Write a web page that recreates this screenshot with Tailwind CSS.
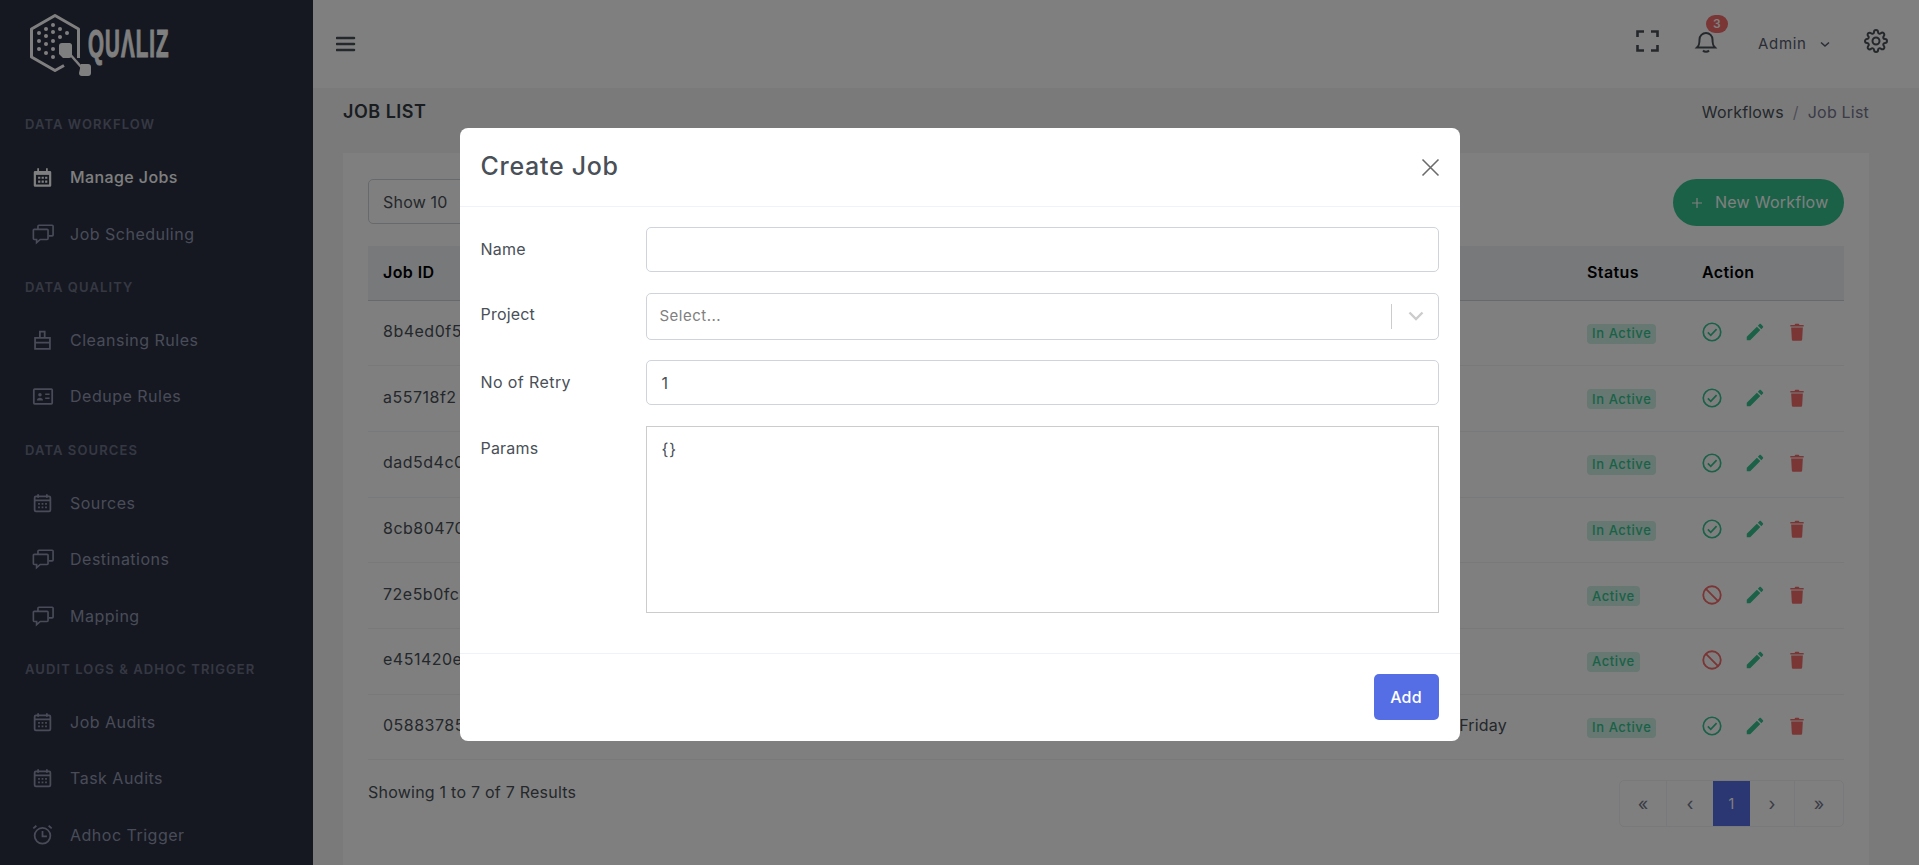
<!DOCTYPE html>
<html lang="en">
<head>
<meta charset="utf-8">
<title>Job List</title>
<script src="https://cdn.jsdelivr.net/npm/@tailwindcss/browser@4"></script>
</head>
<body class="h-screen overflow-hidden bg-[#f5f5f7] font-['Inter','Noto_Sans',sans-serif] text-[#495057] text-[16px] tracking-[0.2px]">
<svg class="hidden">
  <symbol id="cal" viewBox="0 0 24 24"><path d="M7 2v4M17 2v4" fill="none" stroke="currentColor" stroke-width="2"/><rect x="3" y="4.500" width="18" height="17" rx="1.500" fill="none" stroke="currentColor" stroke-width="2"/><path d="M3 9h18" stroke="currentColor" stroke-width="2"/><path d="M7 12h2v2H7zM11 12h2v2h-2zM15 12h2v2h-2zM7 16h2v2H7zM11 16h2v2h-2zM15 16h2v2h-2z" fill="currentColor"/></symbol>
  <symbol id="chat" viewBox="0 0 24 24"><path d="M2.500 7h14a1 1 0 0 1 1 1v9a1 1 0 0 1-1 1H9l-4 3.500V18H2.500a1 1 0 0 1-1-1V8a1 1 0 0 1 1-1z" fill="none" stroke="currentColor" stroke-width="1.800"/><path d="M6.500 6.500V3.500a1 1 0 0 1 1-1H22a1 1 0 0 1 1 1v9.500a1 1 0 0 1-1 1h-3.500" fill="none" stroke="currentColor" stroke-width="1.800"/></symbol>
  <symbol id="ok" viewBox="0 0 24 24"><circle cx="12" cy="12" r="10.500" fill="none" stroke="currentColor" stroke-width="2"/><path d="M7 12.500l3.500 3.500L17.500 8.500" fill="none" stroke="currentColor" stroke-width="2"/></symbol>
  <symbol id="ban" viewBox="0 0 24 24"><circle cx="12" cy="12" r="10.500" fill="none" stroke="currentColor" stroke-width="2.200"/><path d="M5 5l14 14" fill="none" stroke="currentColor" stroke-width="2.200"/></symbol>
  <symbol id="pen" viewBox="0 0 24 24"><path fill="currentColor" d="M20.710 7.040c.39-.39.39-1.040 0-1.410l-2.340-2.340c-.37-.39-1.020-.39-1.410 0l-1.840 1.830 3.750 3.750M3 17.250V21h3.750L17.810 9.930l-3.750-3.750L3 17.250z"/></symbol>
  <symbol id="bin" viewBox="0 0 24 24"><path fill="currentColor" d="M20 3.500H15l-1-1.500h-4L9 3.500H4v2h16zM5 6.500h14l-.8 14.500a1.500 1.500 0 0 1-1.500 1.500H7.300a1.500 1.500 0 0 1-1.500-1.500z"/></symbol>
</svg>

<div class="flex h-full">
  <!-- sidebar -->
  <aside class="w-[313px] shrink-0 bg-[#2a3042] text-[#9299b0] text-[16px] tracking-[0.5px]">
    <div class="relative h-[88px] mb-[11px]">
      <svg class="absolute left-0 top-0" width="100" height="88" viewBox="0 0 100 88">
        <path d="M78.500 58V29L55 15.500 31.500 29v28L55 70.500l9-5" fill="none" stroke="#fff" stroke-width="3" stroke-linejoin="round"/>
        <g fill="#fff"><circle cx="53" cy="25" r="2"/><circle cx="46" cy="29" r="2"/><circle cx="60" cy="29" r="2"/><circle cx="39" cy="33" r="2"/><circle cx="53" cy="32" r="2"/><circle cx="67" cy="33" r="2"/><circle cx="46" cy="36" r="2"/><circle cx="60" cy="37" r="2"/><circle cx="39" cy="41" r="2"/><circle cx="53" cy="41" r="2"/><circle cx="46" cy="44" r="2"/><circle cx="39" cy="49" r="2"/><circle cx="53" cy="49" r="2"/><circle cx="46" cy="53" r="2"/><circle cx="53" cy="57" r="2"/></g>
        <path d="M62 43h8a3 3 0 0 1 2 2v10a3 3 0 0 1-3 3h-6l-4-4v-8a3 3 0 0 1 3-3zM81 64h7a3 3 0 0 1 3 3v6a3 3 0 0 1-3 3h-6a3 3 0 0 1-3-3z" fill="#fff"/>
        <path d="M68 52l15 17" stroke="#fff" stroke-width="2.500"/>
      </svg>
      <span class="absolute left-[88px] top-[22px] origin-left scale-x-[0.54] text-[38px] leading-[44px] font-bold tracking-[2px] text-white [-webkit-text-stroke:1px_white] font-['Liberation_Sans',sans-serif]">QUΛLIZ</span>
    </div>

    <div class="h-[50px] pl-[25px] pt-[2px] flex items-center text-[13px] font-semibold tracking-[1.1px] text-[#6a7187]">DATA WORKFLOW</div>
    <a class="h-[56.4px] pl-[32px] flex items-center gap-[17px] font-medium tracking-[0.4px] text-white">
      <svg width="21" height="23" viewBox="0 0 24 24"><path fill="#fff" d="M6 1.500h2v3h8v-3h2v3h2.500A1.500 1.500 0 0 1 22 6v15a1.500 1.500 0 0 1-1.500 1.500h-17A1.500 1.500 0 0 1 2 21V6a1.500 1.500 0 0 1 1.500-1.500H6z"/><path fill="#2a3042" d="M4.500 9h15v11h-15z"/><path fill="#fff" d="M7 11h2.500v2.500H7zM11 11h2.500v2.500H11zM15 11h2.500v2.500H15zM7 15.500h2.500V18H7zM11 15.500h2.500V18H11zM15 15.500h2.500V18H15z"/></svg>
      <span>Manage Jobs</span>
    </a>
    <a class="h-[56.4px] pl-[32px] flex items-center gap-[16px]"><svg width="22" height="22"><use href="#chat"/></svg><span>Job Scheduling</span></a>

    <div class="h-[50px] pl-[25px] pt-[2px] flex items-center text-[13px] font-semibold tracking-[1.1px] text-[#6a7187]">DATA QUALITY</div>
    <a class="h-[56.4px] pl-[32px] flex items-center gap-[17px]">
      <svg width="21" height="22" viewBox="0 0 24 24" fill="none" stroke="currentColor" stroke-width="2"><path d="M3.500 9.500h17V22h-17zM3.500 15h17M9 9.500V2.500h5.500v7"/></svg>
      <span>Cleansing Rules</span></a>
    <a class="h-[56.4px] pl-[32px] flex items-center gap-[16px]">
      <svg width="22" height="21" viewBox="0 0 24 24" fill="none" stroke="currentColor" stroke-width="2"><rect x="1.500" y="3.500" width="21" height="17" rx="1"/><circle cx="8.500" cy="10" r="2" fill="currentColor" stroke="none"/><path d="M5 16.500c0-4 7-4 7 0z" fill="currentColor" stroke="none"/><path d="M14.500 9.500h5M14.500 14h5" stroke-width="1.600"/></svg>
      <span>Dedupe Rules</span></a>

    <div class="h-[50px] pl-[25px] pt-[2px] flex items-center text-[13px] font-semibold tracking-[1.1px] text-[#6a7187]">DATA SOURCES</div>
    <a class="h-[56.4px] pl-[32px] flex items-center gap-[17px]"><svg width="21" height="22"><use href="#cal"/></svg><span>Sources</span></a>
    <a class="h-[56.4px] pl-[32px] flex items-center gap-[16px]"><svg width="22" height="22"><use href="#chat"/></svg><span>Destinations</span></a>
    <a class="h-[56.4px] pl-[32px] flex items-center gap-[16px]"><svg width="22" height="22"><use href="#chat"/></svg><span>Mapping</span></a>

    <div class="h-[50px] pl-[25px] pt-[2px] flex items-center text-[13px] font-semibold tracking-[1.1px] text-[#6a7187]">AUDIT LOGS &amp; ADHOC TRIGGER</div>
    <a class="h-[56.4px] pl-[32px] flex items-center gap-[17px]"><svg width="21" height="22"><use href="#cal"/></svg><span>Job Audits</span></a>
    <a class="h-[56.4px] pl-[32px] flex items-center gap-[17px]"><svg width="21" height="22"><use href="#cal"/></svg><span>Task Audits</span></a>
    <a class="h-[56.4px] pl-[32px] flex items-center gap-[17px]">
      <svg width="21" height="21" viewBox="0 0 24 24" fill="none" stroke="currentColor" stroke-width="2"><circle cx="12" cy="13.500" r="9"/><path d="M12 8v6h5M1.500 5l3.500-3M22.500 5L19 2"/></svg>
      <span>Adhoc Trigger</span></a>
  </aside>

  <!-- main -->
  <main class="flex-1 min-w-0 flex flex-col">
    <header class="h-[88px] shrink-0 bg-white flex items-center pl-[23px] pr-[31px] text-[#555b6d]">
      <svg width="20" height="18" viewBox="0 0 20 18" class="mt-[-1px]"><path d="M1 3h17M1 9h17M1 15h17" stroke="#495057" stroke-width="2.600" stroke-linecap="round"/></svg>
      <div class="flex-1"></div>
      <svg width="23" height="22" viewBox="0 0 23 22" fill="none" stroke="#495057" stroke-width="2.600" class="mt-[-7px]"><path d="M1.500 7V1.500H8M15 1.500h6.500V7M21.500 15v5.500H15M8 20.500H1.500V15"/></svg>
      <div class="relative ml-[35px] mt-[-6px]">
        <svg width="24" height="25" viewBox="0 0 24 25" fill="none" stroke="#495057" stroke-width="2"><path d="M3 18.500c2-2 2.500-3 2.500-8a6.500 6.500 0 0 1 13 0c0 5 .5 6 2.500 8zM9 21.500c1.500 1.800 4.500 1.800 6 0"/></svg>
        <span class="absolute left-[12px] top-[-14px] w-[22px] h-[18px] rounded-full bg-[#f46a6a] text-white text-[12px] font-semibold flex items-center justify-center">3</span>
      </div>
      <span class="ml-[40px] w-[53px] text-[15px] tracking-[0.7px]">Admin</span>
      <svg width="10" height="7" viewBox="0 0 10 7" fill="none" stroke="#555b6d" stroke-width="1.600" class="ml-[9px]"><path d="M1 1.500l4 3.500 4-3.500"/></svg>
      <svg width="24" height="24" viewBox="0 0 24 24" fill="none" stroke="#495057" stroke-width="2" class="ml-[34px] mt-[-6px]"><circle cx="12" cy="12" r="3.500"/><path d="M19.400 15a1.650 1.650 0 0 0 .33 1.820l.06.06a2 2 0 0 1 0 2.830 2 2 0 0 1-2.830 0l-.06-.06a1.650 1.650 0 0 0-1.820-.33 1.650 1.650 0 0 0-1 1.510V21a2 2 0 0 1-2 2 2 2 0 0 1-2-2v-.09A1.650 1.650 0 0 0 9 19.400a1.650 1.650 0 0 0-1.820.33l-.06.06a2 2 0 0 1-2.830 0 2 2 0 0 1 0-2.830l.06-.06a1.650 1.650 0 0 0 .33-1.820 1.650 1.650 0 0 0-1.510-1H3a2 2 0 0 1-2-2 2 2 0 0 1 2-2h.09A1.650 1.650 0 0 0 4.600 9a1.650 1.650 0 0 0-.33-1.820l-.06-.06a2 2 0 0 1 0-2.830 2 2 0 0 1 2.830 0l.06.06a1.650 1.650 0 0 0 1.820.33H9a1.650 1.650 0 0 0 1-1.510V3a2 2 0 0 1 2-2 2 2 0 0 1 2 2v.09a1.650 1.650 0 0 0 1 1.510 1.650 1.650 0 0 0 1.820-.33l.06-.06a2 2 0 0 1 2.830 0 2 2 0 0 1 0 2.830l-.06.06a1.650 1.650 0 0 0-.33 1.820V9a1.650 1.650 0 0 0 1.510 1H21a2 2 0 0 1 2 2 2 2 0 0 1-2 2h-.09a1.650 1.650 0 0 0-1.510 1z"/></svg>
    </header>

    <div class="h-[65px] shrink-0 pl-[30px] pr-[50px] flex justify-between pt-[12px]">
      <h4 class="text-[18px] leading-[24px] font-semibold tracking-[0.5px] text-[#343a40]">JOB LIST</h4>
      <div class="text-[16px] leading-[24px] flex gap-[9px]"><span>Workflows</span><span class="text-[#74788d]/70">/</span><span class="text-[#74788d]">Job List</span></div>
    </div>

    <section class="ml-[30px] mr-[50px] flex-1 bg-white px-[25px] pt-[26px]">
      <div class="flex justify-between items-start h-[67px]">
        <div class="w-[200px] h-[45px] border border-[#ced4da] rounded-[5px] pl-[14px] flex items-center">Show 10</div>
        <div class="w-[171px] h-[47px] rounded-full bg-[#34c38f] text-white tracking-[0.25px] flex items-center pl-[18px] gap-[12px]">
          <svg width="12" height="12" viewBox="0 0 12 12"><path d="M6 1v10M1 6h10" stroke="#fff" stroke-width="1.200"/></svg>
          <span class="mt-[-2px]">New Workflow</span>
        </div>
      </div>
      <table class="w-full table-fixed border-collapse">
        <colgroup><col class="w-[300px]"><col><col class="w-[115px]"><col class="w-[157px]"></colgroup>
        <thead class="bg-[#eff2f7] text-black text-[16px] tracking-[0.4px]">
          <tr class="h-[54px] border-b border-[#ced4da]"><th class="text-left pl-[15px] pb-[2px] font-semibold">Job ID</th><th></th><th class="text-left pl-[15px] pb-[2px] font-semibold">Status</th><th class="text-left pl-[15px] pb-[2px] font-semibold">Action</th></tr>
        </thead>
        <tbody>
          <tr class="h-[65.7px] border-b border-[#eff2f7]"><td class="pl-[15px] pb-[4px] tracking-[0.5px]">8b4ed0f5</td><td></td><td class="pl-[15px] pb-[2px]"><span class="inline-flex items-center h-[20px] px-[5px] rounded-[4px] bg-[#34c38f]/25 text-[#34c38f] text-[13px] font-medium tracking-[0.6px]">In Active</span></td>
            <td class="pl-[15px] pb-[2px]"><div class="flex items-center text-[#34c38f]"><svg width="20" height="20"><use href="#ok"/></svg><svg width="22" height="22" class="ml-[22px]"><use href="#pen"/></svg><svg width="20" height="22" class="ml-[21px] text-[#f46a6a]"><use href="#bin"/></svg></div></td></tr>
          <tr class="h-[65.7px] border-b border-[#eff2f7]"><td class="pl-[15px] pb-[4px] tracking-[0.5px]">a55718f2</td><td></td><td class="pl-[15px] pb-[2px]"><span class="inline-flex items-center h-[20px] px-[5px] rounded-[4px] bg-[#34c38f]/25 text-[#34c38f] text-[13px] font-medium tracking-[0.6px]">In Active</span></td>
            <td class="pl-[15px] pb-[2px]"><div class="flex items-center text-[#34c38f]"><svg width="20" height="20"><use href="#ok"/></svg><svg width="22" height="22" class="ml-[22px]"><use href="#pen"/></svg><svg width="20" height="22" class="ml-[21px] text-[#f46a6a]"><use href="#bin"/></svg></div></td></tr>
          <tr class="h-[65.7px] border-b border-[#eff2f7]"><td class="pl-[15px] pb-[4px] tracking-[0.5px]">dad5d4c0</td><td></td><td class="pl-[15px] pb-[2px]"><span class="inline-flex items-center h-[20px] px-[5px] rounded-[4px] bg-[#34c38f]/25 text-[#34c38f] text-[13px] font-medium tracking-[0.6px]">In Active</span></td>
            <td class="pl-[15px] pb-[2px]"><div class="flex items-center text-[#34c38f]"><svg width="20" height="20"><use href="#ok"/></svg><svg width="22" height="22" class="ml-[22px]"><use href="#pen"/></svg><svg width="20" height="22" class="ml-[21px] text-[#f46a6a]"><use href="#bin"/></svg></div></td></tr>
          <tr class="h-[65.7px] border-b border-[#eff2f7]"><td class="pl-[15px] pb-[4px] tracking-[0.5px]">8cb80470</td><td></td><td class="pl-[15px] pb-[2px]"><span class="inline-flex items-center h-[20px] px-[5px] rounded-[4px] bg-[#34c38f]/25 text-[#34c38f] text-[13px] font-medium tracking-[0.6px]">In Active</span></td>
            <td class="pl-[15px] pb-[2px]"><div class="flex items-center text-[#34c38f]"><svg width="20" height="20"><use href="#ok"/></svg><svg width="22" height="22" class="ml-[22px]"><use href="#pen"/></svg><svg width="20" height="22" class="ml-[21px] text-[#f46a6a]"><use href="#bin"/></svg></div></td></tr>
          <tr class="h-[65.7px] border-b border-[#eff2f7]"><td class="pl-[15px] pb-[4px] tracking-[0.5px]">72e5b0fc</td><td></td><td class="pl-[15px] pb-[2px]"><span class="inline-flex items-center h-[20px] px-[5px] rounded-[4px] bg-[#34c38f]/25 text-[#34c38f] text-[13px] font-medium tracking-[0.6px]">Active</span></td>
            <td class="pl-[15px] pb-[2px]"><div class="flex items-center text-[#34c38f]"><svg width="20" height="20" class="text-[#f46a6a]"><use href="#ban"/></svg><svg width="22" height="22" class="ml-[22px]"><use href="#pen"/></svg><svg width="20" height="22" class="ml-[21px] text-[#f46a6a]"><use href="#bin"/></svg></div></td></tr>
          <tr class="h-[65.7px] border-b border-[#eff2f7]"><td class="pl-[15px] pb-[4px] tracking-[0.5px]">e451420e</td><td></td><td class="pl-[15px] pb-[2px]"><span class="inline-flex items-center h-[20px] px-[5px] rounded-[4px] bg-[#34c38f]/25 text-[#34c38f] text-[13px] font-medium tracking-[0.6px]">Active</span></td>
            <td class="pl-[15px] pb-[2px]"><div class="flex items-center text-[#34c38f]"><svg width="20" height="20" class="text-[#f46a6a]"><use href="#ban"/></svg><svg width="22" height="22" class="ml-[22px]"><use href="#pen"/></svg><svg width="20" height="22" class="ml-[21px] text-[#f46a6a]"><use href="#bin"/></svg></div></td></tr>
          <tr class="h-[65.7px] border-b border-[#eff2f7]"><td class="pl-[15px] pb-[4px] tracking-[0.5px]">05883785</td><td class="text-right pr-[65px] pb-[4px]">Friday</td><td class="pl-[15px] pb-[2px]"><span class="inline-flex items-center h-[20px] px-[5px] rounded-[4px] bg-[#34c38f]/25 text-[#34c38f] text-[13px] font-medium tracking-[0.6px]">In Active</span></td>
            <td class="pl-[15px] pb-[2px]"><div class="flex items-center text-[#34c38f]"><svg width="20" height="20"><use href="#ok"/></svg><svg width="22" height="22" class="ml-[22px]"><use href="#pen"/></svg><svg width="20" height="22" class="ml-[21px] text-[#f46a6a]"><use href="#bin"/></svg></div></td></tr>
        </tbody>
      </table>
      <div class="flex justify-between items-start pt-[20px]">
        <span class="leading-[24px] tracking-[0.23px]">Showing 1 to 7 of 7 Results</span>
        <div class="flex h-[47px] border border-[#eff2f7] rounded-[5px] text-[#74788d] text-[18px]">
          <span class="w-[47px] flex items-center justify-center border-r border-[#eff2f7]">«</span>
          <span class="w-[46px] flex items-center justify-center">‹</span>
          <span class="w-[37px] flex items-center justify-center bg-[#556ee6] text-white text-[14px]">1</span>
          <span class="w-[45px] flex items-center justify-center border-r border-[#eff2f7]">›</span>
          <span class="w-[48px] flex items-center justify-center">»</span>
        </div>
      </div>
    </section>
  </main>
</div>

<!-- modal -->
<div class="fixed inset-0 bg-black/50 flex justify-center items-start pt-[128px]">
  <div class="w-[1000px] bg-white rounded-[8px]">
    <div class="h-[79px] border-b border-[#eff2f7] flex items-center justify-between pl-[21px] pr-[20px]">
      <h5 class="text-[25px] font-medium tracking-[0.7px] text-[#495057]">Create Job</h5>
      <svg width="19" height="19" viewBox="0 0 19 19" fill="none" stroke="#6b6b6b" stroke-width="1.600" class="mt-[1px]"><path d="M1.500 1.500l16 16M17.500 1.500l-16 16"/></svg>
    </div>
    <div class="grid grid-cols-[165px_1fr] gap-y-[20.5px] px-[21px] pt-[20px] pb-[40px]">
      <label class="pt-[10px] leading-[24px]">Name</label>
      <div class="h-[45px] border border-[#ced4da] rounded-[5px]"></div>
      <label class="pt-[9px] leading-[24px]">Project</label>
      <div class="h-[47px] border border-[#ced4da] rounded-[5px] flex items-center pl-[13px] pr-[14px]">
        <span class="flex-1 text-[#808080] text-[15px] tracking-[0.5px]">Select...</span>
        <span class="w-px h-[25px] bg-[#cccccc]"></span>
        <svg width="16" height="10" viewBox="0 0 16 10" fill="none" stroke="#cccccc" stroke-width="2.400" class="ml-[16px]"><path d="M1.500 1.500L8 8l6.500-6.500"/></svg>
      </div>
      <label class="pt-[10px] leading-[24px] tracking-[0.4px]">No of Retry</label>
      <div class="h-[45px] border border-[#ced4da] rounded-[5px] flex items-center pl-[15px]">1</div>
      <label class="pt-[10px] leading-[24px]">Params</label>
      <div class="h-[187px] border border-[#cccccc] pl-[15px] pt-[10px] leading-[24px] tracking-[1px]">{}</div>
    </div>
    <div class="h-[88px] border-t border-[#eff2f7] flex items-center justify-end pr-[21px]">
      <button class="w-[65px] h-[46px] rounded-[5px] bg-[#556ee6] text-white font-medium">Add</button>
    </div>
  </div>
</div>
</body>
</html>
